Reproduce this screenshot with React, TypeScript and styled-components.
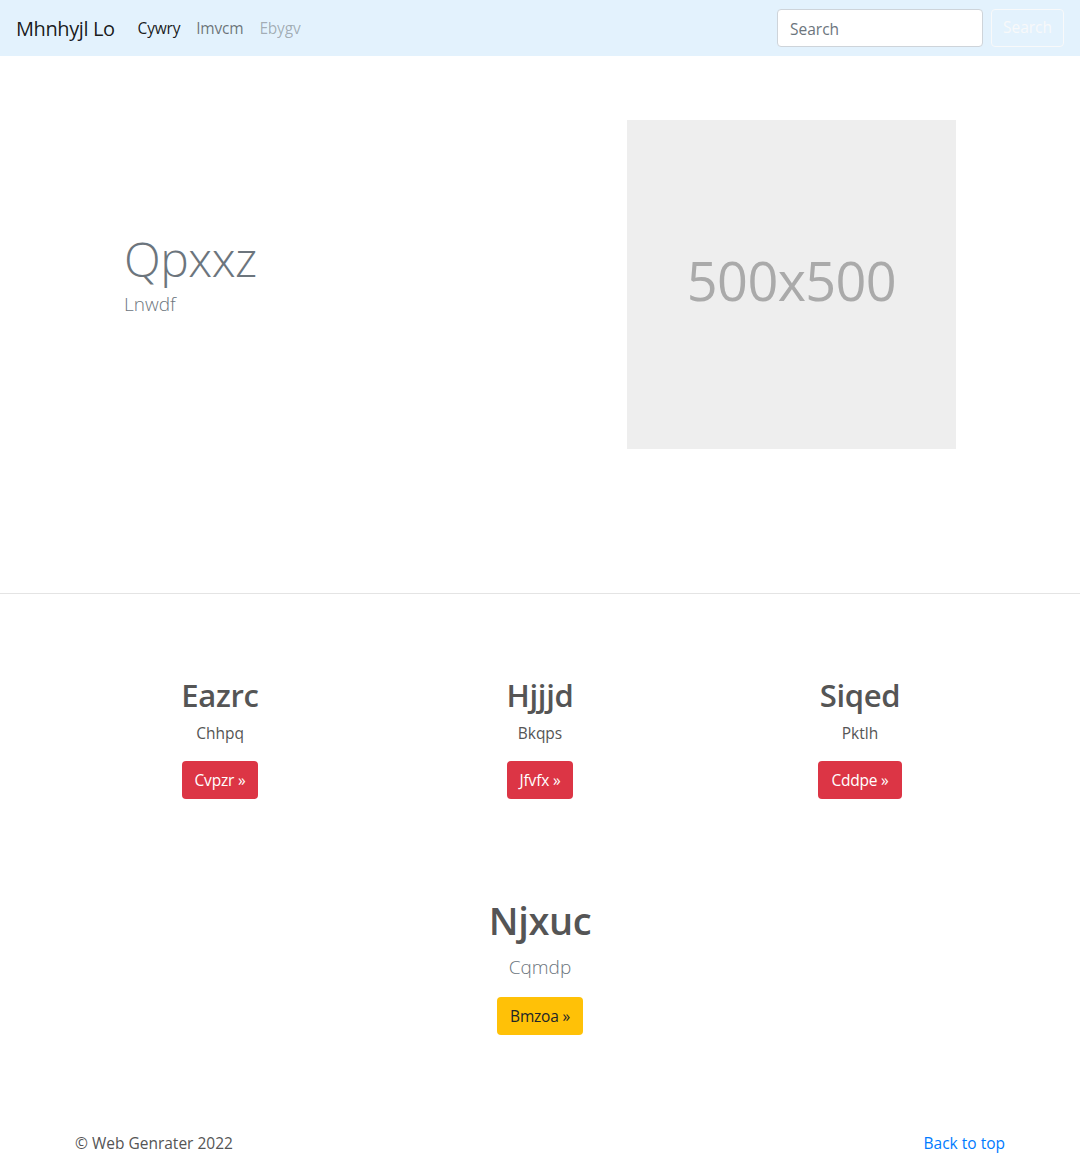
import React from "react";
import styled, { createGlobalStyle } from "styled-components";

const GlobalStyle = createGlobalStyle`
  * { box-sizing: border-box; }
  body {
    margin: 0;
    font-family: "Open Sans", "Noto Sans", "Liberation Sans", sans-serif;
    font-size: 16px;
    line-height: 1.5;
    color: #212529;
    background: #fff;
  }
`;

const Navbar = styled.nav`
  height: 56px;
  background: #e3f2fd;
  display: flex;
  align-items: center;
  padding: 9px 16px 7px;
`;

const Brand = styled.a`
  font-size: 20px;
  line-height: 30px;
  color: rgba(0, 0, 0, 0.9);
  margin-right: 15px;
  text-decoration: none;
  letter-spacing: -0.4px;
`;

const NavList = styled.ul`
  display: flex;
  list-style: none;
  margin: 0;
  padding: 0;
  flex: 1;
`;

const NavLink = styled.a<{ $state?: "active" | "disabled" }>`
  display: block;
  padding: 8px;
  font-size: 15.5px;
  letter-spacing: -0.2px;
  text-decoration: none;
  color: ${(p) =>
    p.$state === "active"
      ? "rgba(0,0,0,0.9)"
      : p.$state === "disabled"
      ? "rgba(0,0,0,0.3)"
      : "rgba(0,0,0,0.55)"};
`;

const SearchForm = styled.form`
  display: flex;
  align-items: center;
  margin-top: -2px;
`;

const SearchInput = styled.input`
  width: 206px;
  height: 38px;
  padding: 7px 12px 5px;
  font: inherit;
  font-size: 15.5px;
  border: 1px solid #ced4da;
  border-radius: 4px;
  margin-right: 8px;
  background: #fff;
  &::placeholder { color: #6c757d; }
`;

const OutlineButton = styled.button`
  height: 38px;
  width: 73px;
  padding: 6px 10px;
  font: inherit;
  font-size: 15.5px;
  color: #f8f9fa;
  background: transparent;
  border: 1px solid #f8f9fa;
  border-radius: 4px;
`;

const Container = styled.div`
  width: 960px;
  margin: 0 auto;
`;

const Hero = styled.section`
  padding: 64px 0 144px;
  border-bottom: 1px solid #e4e4e4;
`;

const HeroRow = styled(Container)`
  display: grid;
  grid-template-columns: 1fr 1fr;
  align-items: center;
`;

const HeroText = styled.div`
  padding: 0 0 20px 64px;
`;

const DisplayHeading = styled.h1`
  margin: 0 0 2px;
  font-size: 48px;
  font-weight: 300;
  line-height: 1.2;
  color: #6c757d;
  letter-spacing: -0.5px;
`;

const Lead = styled.p<{ $center?: boolean }>`
  margin: 0;
  font-size: 19px;
  font-weight: 300;
  line-height: 30px;
  color: #6c757d;
  text-align: ${(p) => (p.$center ? "center" : "left")};
`;

const ImageCol = styled.div`
  display: flex;
  justify-content: flex-end;
  padding-right: 64px;
`;

const Placeholder = styled.div`
  width: 329px;
  height: 329px;
  background: #eeeeee;
  color: #aaaaaa;
  display: flex;
  align-items: center;
  justify-content: center;
  padding-bottom: 8px;
  font-size: 54px;
  letter-spacing: -0.6px;
`;

const Features = styled(Container)`
  padding-top: 82px;
  display: grid;
  grid-template-columns: repeat(3, 1fr);
`;

const Feature = styled.div`
  text-align: center;
`;

const FeatureTitle = styled.h2`
  margin: 0 0 8px;
  font-size: 31px;
  font-weight: 600;
  line-height: 38px;
  color: #555;
  letter-spacing: -0.3px;
`;

const FeatureText = styled.p`
  margin: 0 0 16px;
  font-size: 15.5px;
  color: #555;
`;

const Button = styled.a<{ $variant: "danger" | "warning" }>`
  display: inline-block;
  height: 38px;
  padding: 6px 12px;
  font-size: 15.5px;
  line-height: 24px;
  border: 1px solid transparent;
  border-radius: 4px;
  text-decoration: none;
  letter-spacing: -0.2px;
  background: ${(p) => (p.$variant === "danger" ? "#dc3545" : "#ffc107")};
  color: ${(p) => (p.$variant === "danger" ? "#fff" : "#212529")};
`;

const Cta = styled.section`
  margin-top: 97px;
  text-align: center;
`;

const CtaTitle = styled.h1`
  margin: 0 0 8px;
  font-size: 38px;
  font-weight: 600;
  line-height: 48px;
  color: #555;
  letter-spacing: -0.4px;
`;

const CtaLead = styled(Lead)`
  margin-bottom: 15px;
`;

const Footer = styled.footer`
  width: 930px;
  margin: 96px auto 0;
  display: flex;
  justify-content: space-between;
  font-size: 15.5px;
  line-height: 24px;
  color: #555;
`;

const FooterLink = styled.a`
  color: #007bff;
  text-decoration: none;
`;

const features = [
  { title: "Eazrc", text: "Chhpq", cta: "Cvpzr" },
  { title: "Hjjjd", text: "Bkqps", cta: "Jfvfx" },
  { title: "Siqed", text: "Pktlh", cta: "Cddpe" },
];

export default function App() {
  return (
    <>
      <GlobalStyle />
      <Navbar>
        <Brand href="#">Mhnhyjl Lo</Brand>
        <NavList>
          <li><NavLink href="#" $state="active">Cywry</NavLink></li>
          <li><NavLink href="#">Imvcm</NavLink></li>
          <li><NavLink href="#" $state="disabled">Ebygv</NavLink></li>
        </NavList>
        <SearchForm onSubmit={(e) => e.preventDefault()}>
          <SearchInput type="search" placeholder="Search" aria-label="Search" />
          <OutlineButton type="submit">Search</OutlineButton>
        </SearchForm>
      </Navbar>

      <Hero>
        <HeroRow>
          <HeroText>
            <DisplayHeading>Qpxxz</DisplayHeading>
            <Lead>Lnwdf</Lead>
          </HeroText>
          <ImageCol>
            <Placeholder>500x500</Placeholder>
          </ImageCol>
        </HeroRow>
      </Hero>

      <Features>
        {features.map((f) => (
          <Feature key={f.title}>
            <FeatureTitle>{f.title}</FeatureTitle>
            <FeatureText>{f.text}</FeatureText>
            <Button href="#" $variant="danger">{f.cta} »</Button>
          </Feature>
        ))}
      </Features>

      <Cta>
        <CtaTitle>Njxuc</CtaTitle>
        <CtaLead $center>Cqmdp</CtaLead>
        <Button href="#" $variant="warning">Bmzoa »</Button>
      </Cta>

      <Footer>
        <span>© Web Genrater 2022</span>
        <FooterLink href="#">Back to top</FooterLink>
      </Footer>
    </>
  );
}
